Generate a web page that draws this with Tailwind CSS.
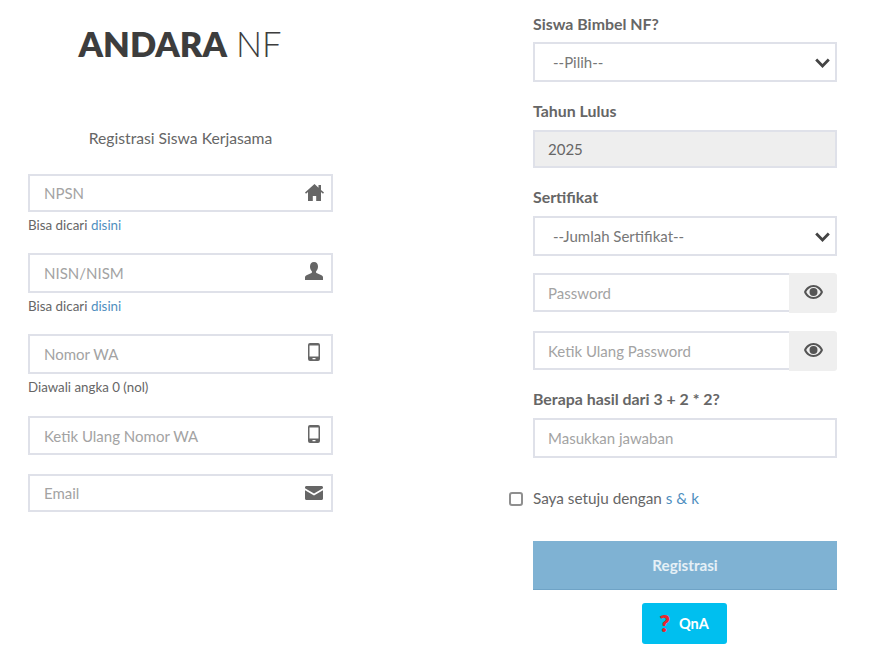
<!DOCTYPE html>
<html lang="en">
<head>
  <meta charset="UTF-8">
  <title>Registrasi - ANDARA NF</title>
  <script src="https://cdn.jsdelivr.net/npm/@tailwindcss/browser@4"></script>
</head>
<body class="bg-white font-['Lato','Noto_Sans',sans-serif] text-[#666] overflow-hidden">
  <div class="flex w-[878px] h-[651px]">

    <!-- Left column -->
    <div class="w-[305px] ml-[28px] flex flex-col">
      <h1 class="mt-[22px] h-[46px] leading-[44px] text-center text-[34.500px] text-[#3d3d3d] pr-[1px]"><span class="font-extrabold">ANDARA</span> <span class="font-light">NF</span></h1>
      <p class="mt-[61px] h-[20px] leading-[18px] text-center text-[15.7px]">Registrasi Siswa Kerjasama</p>

      <div class="relative mt-[25px] h-[38px]">
        <input placeholder="NPSN" class="w-full h-full border-2 border-[#dfe1e9] pl-[14px] text-[15px] outline-none placeholder:text-[#a3a3a3]">
        <svg class="absolute right-[9px] top-[10px] w-[19px] h-[17px]" viewBox="0 0 19 17" fill="#666"><path d="M9.500 0 0 8.600l1 1.100 2-1.700V17h4.800v-5h3.400v5H16V8l2 1.700 1-1.100-3-2.700V1h-2.500v2.700z"/></svg>
      </div>
      <p class="mt-[5px] h-[16px] leading-[16px] text-[13.4px]">Bisa dicari <a href="#" class="text-[#4f8fc0]">disini</a></p>

      <div class="relative mt-[20px] h-[40px]">
        <input placeholder="NISN/NISM" class="w-full h-full border-2 border-[#dfe1e9] pl-[14px] text-[15px] outline-none placeholder:text-[#a3a3a3]">
        <svg class="absolute right-[10px] top-[9px] w-[18px] h-[18px]" viewBox="0 0 18 18" fill="#666"><path d="M9 0c2.600 0 4 1.900 4 4.500 0 1.900-.8 3.700-1.800 4.800-.4.500-.3 1.300.3 1.600l5 2.300c1 .5 1.500 1.100 1.500 2.300V18H0v-2.500c0-1.200.5-1.800 1.500-2.300l5-2.300c.6-.3.7-1.100.3-1.600C5.800 8.200 5 6.400 5 4.500 5 1.900 6.400 0 9 0z"/></svg>
      </div>
      <p class="mt-[5px] h-[16px] leading-[16px] text-[13.4px]">Bisa dicari <a href="#" class="text-[#4f8fc0]">disini</a></p>

      <div class="relative mt-[20px] h-[40px]">
        <input placeholder="Nomor WA" class="w-full h-full border-2 border-[#dfe1e9] pl-[14px] text-[15px] outline-none placeholder:text-[#a3a3a3]">
        <svg class="absolute right-[13px] top-[9px] w-[12px] h-[18px]" viewBox="0 0 12 18" fill="#666"><path fill-rule="evenodd" d="M2 0h8a2 2 0 0 1 2 2v14a2 2 0 0 1-2 2H2a2 2 0 0 1-2-2V2a2 2 0 0 1 2-2zm-.5 2.500v11h9v-11zM4.500 15v1.200h3V15z"/></svg>
      </div>
      <p class="mt-[5px] h-[16px] leading-[16px] text-[13.300px]">Diawali angka 0 (nol)</p>

      <div class="relative mt-[21px] h-[39px]">
        <input placeholder="Ketik Ulang Nomor WA" class="w-full h-full border-2 border-[#dfe1e9] pl-[14px] text-[15px] outline-none placeholder:text-[#a3a3a3]">
        <svg class="absolute right-[13px] top-[9px] w-[12px] h-[18px]" viewBox="0 0 12 18" fill="#666"><path fill-rule="evenodd" d="M2 0h8a2 2 0 0 1 2 2v14a2 2 0 0 1-2 2H2a2 2 0 0 1-2-2V2a2 2 0 0 1 2-2zm-.5 2.500v11h9v-11zM4.500 15v1.200h3V15z"/></svg>
      </div>

      <div class="relative mt-[19px] h-[38px]">
        <input placeholder="Email" class="w-full h-full border-2 border-[#dfe1e9] pl-[14px] text-[15px] outline-none placeholder:text-[#a3a3a3]">
        <svg class="absolute right-[10px] top-[12px] w-[18px] h-[14px]" viewBox="0 0 18 14" fill="#666"><path d="M1.500 0h15C17.400 0 18 .6 18 1.500v.7L9 7.500 0 2.200v-.7C0 .6.600 0 1.500 0zM0 4.200l9 5.300 9-5.300v8.300c0 .9-.6 1.500-1.500 1.500h-15C.6 14 0 13.400 0 12.500z"/></svg>
      </div>
    </div>

    <!-- Right column -->
    <div class="w-[304px] ml-[200px] flex flex-col">
      <label class="mt-[15px] h-[20px] leading-[18px] text-[15.9px] font-bold">Siswa Bimbel NF?</label>
      <div class="relative mt-[7px] h-[40px]">
        <select class="appearance-none w-full h-full border-2 border-[#dfe1e9] bg-white pl-[18px] text-[15px] text-[#777] outline-none"><option>--Pilih--</option></select>
        <svg class="absolute right-[7px] top-[16px] w-[15px] h-[10px]" viewBox="0 0 15 10" fill="none" stroke="#444" stroke-width="2.800"><path d="M1.200 1.500 7.500 8l6.300-6.500"/></svg>
      </div>

      <label class="mt-[20px] h-[20px] leading-[18px] text-[15.9px] font-bold">Tahun Lulus</label>
      <input value="2025" disabled class="mt-[8px] h-[38px] border-2 border-[#dfe1e9] bg-[#eeeeee] pl-[13px] text-[15px] text-[#666] outline-none">

      <label class="mt-[20px] h-[20px] leading-[18px] text-[15.9px] font-bold">Sertifikat</label>
      <div class="relative mt-[8px] h-[40px]">
        <select class="appearance-none w-full h-full border-2 border-[#dfe1e9] bg-white pl-[18px] text-[15px] text-[#777] outline-none"><option>--Jumlah Sertifikat--</option></select>
        <svg class="absolute right-[7px] top-[16px] w-[15px] h-[10px]" viewBox="0 0 15 10" fill="none" stroke="#444" stroke-width="2.800"><path d="M1.200 1.500 7.500 8l6.300-6.500"/></svg>
      </div>

      <div class="flex mt-[17px] h-[40px]">
        <input placeholder="Password" class="flex-1 min-w-0 h-[39px] border-2 border-r-0 border-[#dfe1e9] pl-[13px] text-[15px] outline-none placeholder:text-[#a3a3a3]">
        <div class="w-[48px] bg-[#efefef] rounded-r-[3px] flex items-center justify-center">
          <svg class="w-[19px] h-[14px] -mt-[3px]" viewBox="0 0 19 14"><path fill="#555" fill-rule="evenodd" d="M9.500 0C14 0 17.500 3.200 19 7c-1.500 3.800-5 7-9.500 7S1.500 10.800 0 7C1.500 3.200 5 0 9.500 0zm0 2C6.400 2 3.600 4 2.200 7c1.400 3 4.200 5 7.300 5s5.900-2 7.300-5c-1.400-3-4.200-5-7.300-5zm0 1a4 4 0 1 1 0 8 4 4 0 0 1 0-8z"/></svg>
        </div>
      </div>

      <div class="flex mt-[18px] h-[40px]">
        <input placeholder="Ketik Ulang Password" class="flex-1 min-w-0 h-[39px] border-2 border-r-0 border-[#dfe1e9] pl-[13px] text-[15px] outline-none placeholder:text-[#a3a3a3]">
        <div class="w-[48px] bg-[#efefef] rounded-r-[3px] flex items-center justify-center">
          <svg class="w-[19px] h-[14px] -mt-[3px]" viewBox="0 0 19 14"><path fill="#555" fill-rule="evenodd" d="M9.500 0C14 0 17.500 3.200 19 7c-1.500 3.800-5 7-9.500 7S1.500 10.800 0 7C1.500 3.200 5 0 9.500 0zm0 2C6.400 2 3.600 4 2.200 7c1.400 3 4.200 5 7.300 5s5.900-2 7.300-5c-1.400-3-4.200-5-7.300-5zm0 1a4 4 0 1 1 0 8 4 4 0 0 1 0-8z"/></svg>
        </div>
      </div>

      <label class="mt-[19px] h-[20px] leading-[18px] text-[15.9px] font-bold">Berapa hasil dari 3 + 2 * 2?</label>
      <input placeholder="Masukkan jawaban" class="mt-[8px] h-[40px] border-2 border-[#dfe1e9] pl-[13px] text-[15px] outline-none placeholder:text-[#a3a3a3]">

      <div class="relative mt-[31px] h-[20px] leading-[19px] text-[15.3px]">
        <span class="absolute -left-[24px] top-[3px] w-[14px] h-[14px] border-2 border-[#8f8f8f] rounded-[3px] bg-white"></span>
        Saya setuju dengan <a href="#" class="text-[#4f8fc0]">s &amp; k</a>
      </div>

      <button class="mt-[32px] h-[49px] bg-[#7fb2d3] border-b border-[#6fa3c6] text-white/80 font-bold text-[15.2px]">Registrasi</button>

      <button class="self-center mt-[13px] -ml-[1px] w-[85px] h-[41px] bg-[#00bfef] rounded-[3px] flex items-center justify-center gap-[9px] pr-[1px] text-white text-[14.5px] font-bold">
        <span class="text-[#e8262d] text-[23px] leading-none font-extrabold">?</span>QnA
      </button>
    </div>
  </div>
</body>
</html>
